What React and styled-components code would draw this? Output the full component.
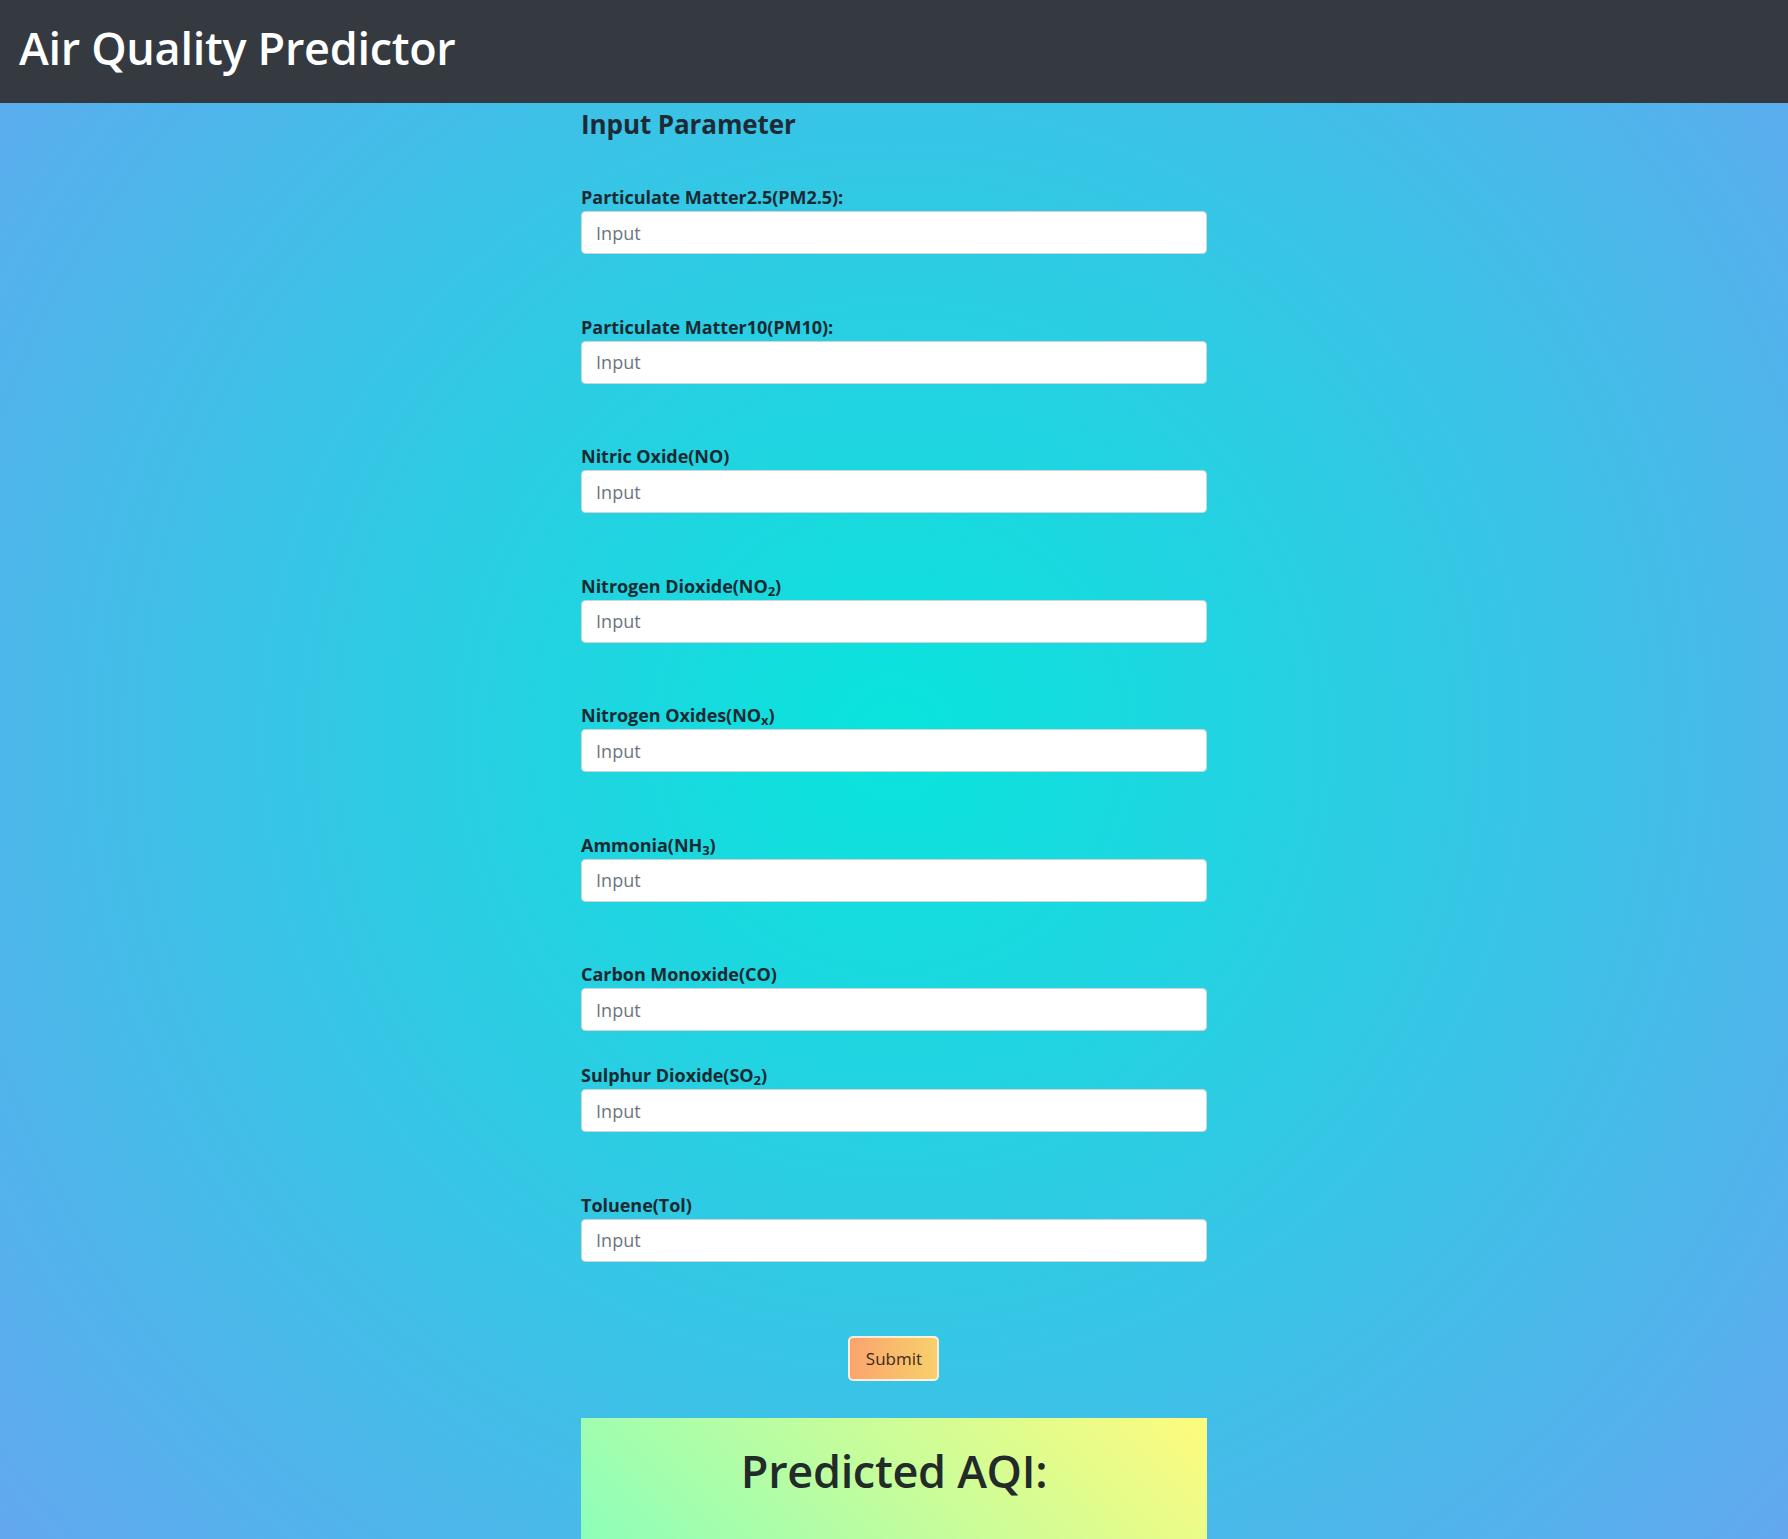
import React from 'react';
import styled, { createGlobalStyle } from 'styled-components';

const GlobalStyle = createGlobalStyle`
  html, body {
    margin: 0;
    padding: 0;
  }
  body {
    font-family: "Open Sans", "Noto Sans", sans-serif;
    color: #212529;
    background: #62a6ee;
  }
  * {
    box-sizing: border-box;
  }
`;

const Page = styled.div`
  min-height: 1539px;
  display: flex;
  flex-direction: column;
`;

const Navbar = styled.header`
  height: 103px;
  background-color: #343a40;
  display: flex;
  align-items: center;
  padding: 0 19px 8px;
`;

const Brand = styled.h1`
  margin: 0;
  color: #fff;
  font-size: 45px;
  font-weight: 600;
  letter-spacing: -0.3px;
`;

const Main = styled.main`
  flex: 1;
  background: radial-gradient(circle farthest-corner at 50% 635px, #0ae4dd 0%, #0fe0dd 8%, #67a5f0 100%);
  padding-top: 6px;
  padding-bottom: 20px;
`;

const Container = styled.div`
  width: 35%;
  margin: 0 auto;
  display: flex;
  flex-direction: column;
`;

const Heading = styled.h4`
  margin: 0 0 42px;
  font-size: 26px;
  line-height: 1.2;
  font-weight: 700;
  color: #1d2b36;
  letter-spacing: -0.1px;
`;

const Field = styled.div`
  display: flex;
  flex-direction: column;
  margin-bottom: ${props => props.gap}px;
`;

const Label = styled.label`
  font-size: 18px;
  line-height: 29px;
  padding-top: 1px;
  margin-bottom: -1px;
  font-weight: 700;
  color: #1a2a33;
  letter-spacing: -0.05px;

  sub {
    font-size: 13px;
    line-height: 0;
    vertical-align: -3px;
  }
`;

const TextInput = styled.input`
  height: 43px;
  width: 100%;
  border: 1px solid #ced4da;
  border-radius: 4.5px;
  background: #fff;
  padding: 0 14px;
  font-family: "Open Sans", "Noto Sans", sans-serif;
  font-size: 18px;
  color: #495057;
  outline: none;

  &::placeholder {
    color: #6c757d;
  }
`;

const SubmitRow = styled.div`
  display: flex;
  justify-content: center;
  margin: 74px 0 37px;
`;

const SubmitButton = styled.button`
  width: 91px;
  height: 45px;
  border: 2px solid rgba(255, 255, 255, 0.75);
  border-radius: 5px;
  background: linear-gradient(90deg, #fba46f 0%, #f8d06a 100%);
  font-family: "Open Sans", "Noto Sans", sans-serif;
  font-size: 17px;
  color: #3a2a1a;
  cursor: pointer;
`;

const ResultBox = styled.section`
  min-height: 170px;
  background: linear-gradient(45deg, #85ffbd 0%, #fffb7d 100%);
  padding-top: 26px;
  text-align: center;
`;

const ResultTitle = styled.h2`
  margin: 0;
  font-size: 45px;
  line-height: 1.2;
  font-weight: 600;
  color: #232a2a;
  letter-spacing: -0.3px;
`;

const fields = [
  { label: <>Particulate Matter2.5(PM2.5):</>, gap: 57.5 },
  { label: <>Particulate Matter10(PM10):</>, gap: 57.5 },
  { label: <>Nitric Oxide(NO)</>, gap: 57.5 },
  { label: <>Nitrogen Dioxide(NO<sub>2</sub>)</>, gap: 57.5 },
  { label: <>Nitrogen Oxides(NO<sub>x</sub>)</>, gap: 57.5 },
  { label: <>Ammonia(NH<sub>3</sub>)</>, gap: 57.5 },
  { label: <>Carbon Monoxide(CO)</>, gap: 29 },
  { label: <>Sulphur Dioxide(SO<sub>2</sub>)</>, gap: 57.5 },
  { label: <>Toluene(Tol)</>, gap: 0 },
];

export default function App() {
  return (
    <>
      <GlobalStyle />
      <Page>
        <Navbar>
          <Brand>Air Quality Predictor</Brand>
        </Navbar>
        <Main>
          <Container>
            <Heading>Input Parameter</Heading>
            {fields.map((f, i) => (
              <Field key={i} gap={f.gap}>
                <Label>{f.label}</Label>
                <TextInput type="text" placeholder="Input" />
              </Field>
            ))}
            <SubmitRow>
              <SubmitButton type="button">Submit</SubmitButton>
            </SubmitRow>
            <ResultBox>
              <ResultTitle>Predicted AQI:</ResultTitle>
            </ResultBox>
          </Container>
        </Main>
      </Page>
    </>
  );
}
